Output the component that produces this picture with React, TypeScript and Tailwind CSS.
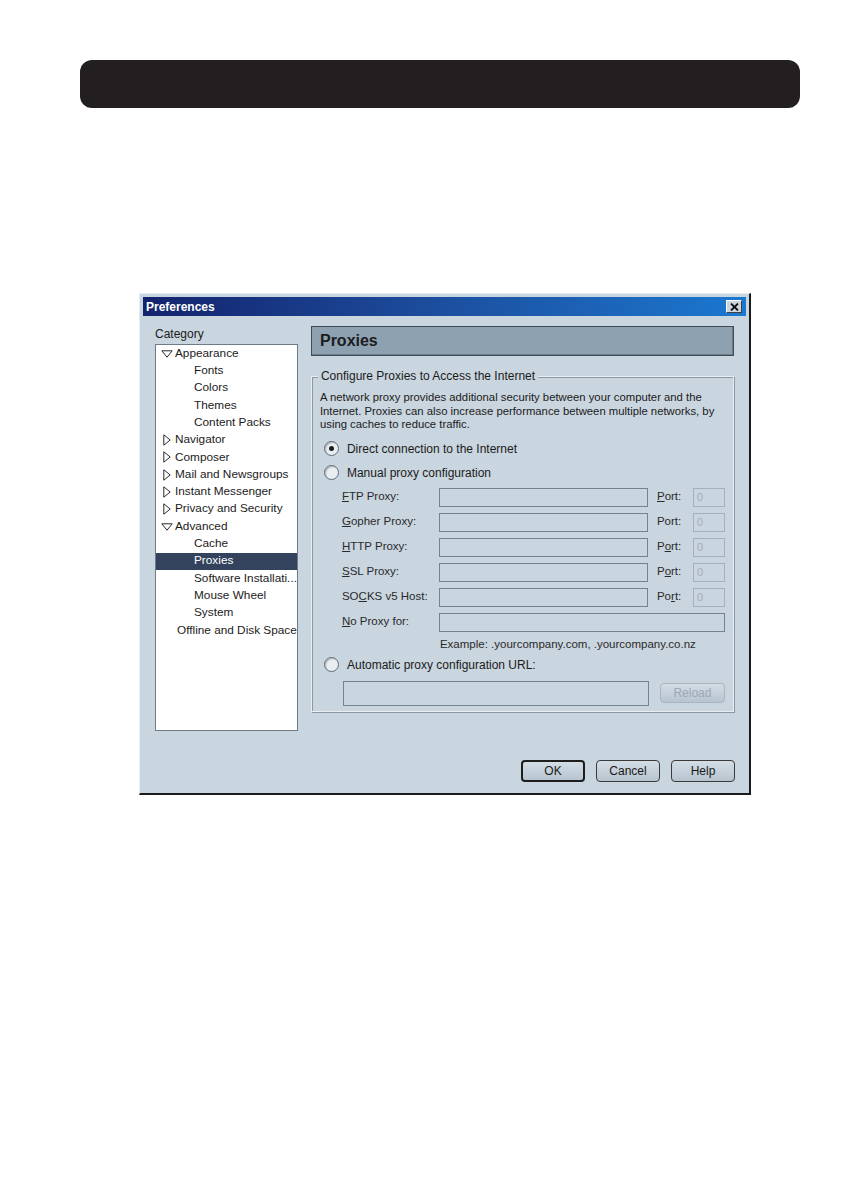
import React from "react";

const font = { fontFamily: '"Liberation Sans", Arial, sans-serif' };

type Node = { label: string; level: 0 | 1; twisty?: "open" | "closed"; selected?: boolean };

const tree: Node[] = [
  { label: "Appearance", level: 0, twisty: "open" },
  { label: "Fonts", level: 1 },
  { label: "Colors", level: 1 },
  { label: "Themes", level: 1 },
  { label: "Content Packs", level: 1 },
  { label: "Navigator", level: 0, twisty: "closed" },
  { label: "Composer", level: 0, twisty: "closed" },
  { label: "Mail and Newsgroups", level: 0, twisty: "closed" },
  { label: "Instant Messenger", level: 0, twisty: "closed" },
  { label: "Privacy and Security", level: 0, twisty: "closed" },
  { label: "Advanced", level: 0, twisty: "open" },
  { label: "Cache", level: 1 },
  { label: "Proxies", level: 1, selected: true },
  { label: "Software Installati...", level: 1 },
  { label: "Mouse Wheel", level: 1 },
  { label: "System", level: 1 },
  { label: "Offline and Disk Space", level: 0 },
];

function Twisty({ open }: { open: boolean }) {
  return open ? (
    <svg width="12" height="8" viewBox="0 0 12 8" className="shrink-0">
      <path d="M0.8 0.8 H11.2 L6 7.2 Z" fill="white" stroke="#2a2a2a" strokeWidth="1" />
    </svg>
  ) : (
    <svg width="8" height="12" viewBox="0 0 8 12" className="shrink-0">
      <path d="M0.8 0.8 V11.2 L7.2 6 Z" fill="white" stroke="#2a2a2a" strokeWidth="1" />
    </svg>
  );
}

function Radio({ checked }: { checked?: boolean }) {
  return (
    <span className="w-[15px] h-[15px] rounded-full border border-[#5f6d7a] bg-[#e9eef2] flex items-center justify-center shrink-0 shadow-[inset_1px_1px_1px_rgba(0,0,0,0.25)]">
      {checked && <span className="w-[5px] h-[5px] rounded-full bg-[#1c1c1c]" />}
    </span>
  );
}

function Field({ className = "" }: { className?: string }) {
  return <div className={"h-[19px] border border-[#75838f] bg-[#c9d5df] " + className} />;
}

const rows: { pre: string; u: string; post: string; port: [string, string, string] }[] = [
  { pre: "", u: "F", post: "TP Proxy:", port: ["", "P", "ort:"] },
  { pre: "", u: "G", post: "opher Proxy:", port: ["Port:", "", ""] },
  { pre: "", u: "H", post: "TTP Proxy:", port: ["P", "o", "rt:"] },
  { pre: "", u: "S", post: "SL Proxy:", port: ["P", "o", "rt:"] },
  { pre: "SO", u: "C", post: "KS v5 Host:", port: ["Po", "r", "t:"] },
];

function Btn({ children, def, disabled, className = "" }: { children: React.ReactNode; def?: boolean; disabled?: boolean; className?: string }) {
  return (
    <div
      className={
        "flex items-center justify-center rounded-[4px] bg-gradient-to-b from-[#d3dde6] to-[#b7c4cf] text-[12px] " +
        (def
          ? "border-2 border-[#1e1e1e] text-[#1a1a1a] "
          : disabled
          ? "border border-[#a9b5c0] text-[#9ba7b2] "
          : "border border-[#3a3a3a] text-[#1a1a1a] ") +
        className
      }
    >
      {children}
    </div>
  );
}

export default function App() {
  return (
    <div className="w-[860px] h-[1201px] bg-white text-[#1b1b1b]" style={font}>
      <div className="pt-[60px] pl-[80px] pr-[60px]">
        <div className="h-[48px] rounded-[12px] bg-[#231f20]" />
      </div>

      {/* dialog */}
      <div className="ml-[139px] mt-[185px] w-[612px] h-[502px] bg-[#c9d5df] border-t border-l border-[#e6ecf1] border-r-2 border-b-2 border-r-[#1b1b1b] border-b-[#1b1b1b] p-[3px] flex flex-col">
        <div className="h-[19px] bg-gradient-to-r from-[#14236e] via-[#1c4f9f] to-[#1a78d0] flex items-center justify-between pl-[3px] pr-[4px]">
          <span className="text-white font-bold text-[12px]">Preferences</span>
          <span className="w-[16px] h-[13px] bg-[#cdd6de] border border-t-white border-l-white border-r-[#404040] border-b-[#404040] flex items-center justify-center">
            <svg width="9" height="8" viewBox="0 0 9 8">
              <path d="M1 0.5 L8 7.5 M8 0.5 L1 7.5" stroke="#111" strokeWidth="1.8" />
            </svg>
          </span>
        </div>

        <div className="flex-1 flex pl-[12px] pr-[12px] pt-[10px]">
          {/* left column */}
          <div className="w-[143px] flex flex-col">
            <div className="text-[12px] leading-[14px] mt-[1px]">Category</div>
            <div className="mt-[3px] h-[387px] bg-white border border-[#6e7c88]">
              {tree.map((n) => (
                <div
                  key={n.label}
                  className={
                    "h-[17.3px] flex items-center text-[11.8px] whitespace-nowrap " +
                    (n.selected ? "bg-[#33435d] text-white" : "")
                  }
                >
                  {n.level === 0 ? (
                    <>
                      <span className="w-[19px] flex justify-center pl-[2px]">
                        {n.twisty && <Twisty open={n.twisty === "open"} />}
                      </span>
                      <span className={n.twisty ? "" : "ml-[2px]"}>{n.label}</span>
                    </>
                  ) : (
                    <span className="pl-[38px]">{n.label}</span>
                  )}
                </div>
              ))}
            </div>
          </div>

          {/* right column */}
          <div className="ml-[13px] w-[424px] flex flex-col">
            <div className="h-[30px] bg-[#8ea1b1] border border-[#3f4c58] shadow-[inset_-1px_-1px_0_#6b7b88] flex items-center pl-[8px]">
              <span className="font-bold text-[16px] text-[#1c1c1c]">Proxies</span>
            </div>

            <div className="mt-[20px] h-[336px] border border-[#e9eef2] shadow-[inset_1px_1px_0_#8a98a4,1px_1px_0_#8a98a4] relative pl-[8px] pr-[8px]">
              <span className="absolute -top-[8px] left-[6px] bg-[#c9d5df] px-[3px] text-[12px] leading-[14px]">
                Configure Proxies to Access the Internet
              </span>
              <p className="mt-[14px] text-[11.3px] leading-[13.5px]">
                A network proxy provides additional security between your computer and the Internet. Proxies can also
                increase performance between multiple networks, by using caches to reduce traffic.
              </p>

              <div className="mt-[5px] flex items-center gap-[8px] pl-[4px] h-[24px] text-[12px]">
                <Radio checked />
                <span>Direct connection to the Internet</span>
              </div>
              <div className="flex items-center gap-[8px] pl-[4px] h-[24px] text-[12px]">
                <Radio />
                <span>Manual proxy configuration</span>
              </div>

              <div className="mt-[3px] flex flex-col gap-[6px] text-[11.5px]">
                {rows.map((r) => (
                  <div key={r.post} className="flex items-center h-[19px]">
                    <span className="w-[119px] pl-[22px] text-[#2a2a2a] whitespace-nowrap">
                      {r.pre}
                      <span className="underline">{r.u}</span>
                      {r.post}
                    </span>
                    <Field className="w-[209px]" />
                    <span className="w-[45px] pl-[9px] text-[#2a2a2a]">
                      {r.port[0]}
                      {r.port[1] && <span className="underline">{r.port[1]}</span>}
                      {r.port[2]}
                    </span>
                    <div className="w-[32px] h-[19px] border border-[#a4b0bb] text-[#a3adb7] text-[11px] pl-[3px] flex items-center">
                      0
                    </div>
                  </div>
                ))}
                <div className="flex items-center h-[19px]">
                  <span className="w-[119px] pl-[22px] text-[#2a2a2a] whitespace-nowrap">
                    <span className="underline">N</span>o Proxy for:
                  </span>
                  <Field className="w-[286px]" />
                </div>
              </div>
              <div className="pl-[120px] mt-[5px] text-[11.5px] leading-[14px] text-[#2a2a2a]">
                Example: .yourcompany.com, .yourcompany.co.nz
              </div>

              <div className="mt-[6px] flex items-center gap-[8px] pl-[4px] h-[16px] text-[12px]">
                <Radio />
                <span>Automatic proxy configuration URL:</span>
              </div>
              <div className="mt-[8px] flex items-center">
                <div className="w-[306px] h-[25px] ml-[23px] border border-[#75838f] bg-[#c9d5df]" />
                <Btn disabled className="ml-[11px] w-[65px] h-[20px]">
                  Reload
                </Btn>
              </div>
            </div>
          </div>
        </div>

        <div className="flex justify-end gap-[11px] pr-[11px] pb-[8px]">
          <Btn def className="w-[64px] h-[22px]">
            OK
          </Btn>
          <Btn className="w-[64px] h-[22px]">Cancel</Btn>
          <Btn className="w-[64px] h-[22px]">Help</Btn>
        </div>
      </div>
    </div>
  );
}
